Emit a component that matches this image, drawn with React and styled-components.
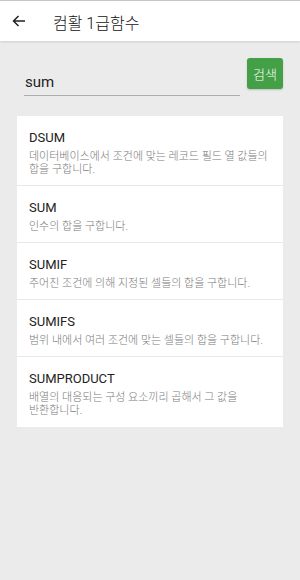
import React from "react";
import styled, { createGlobalStyle } from "styled-components";

const GlobalStyle = createGlobalStyle`
  html, body {
    margin: 0;
    padding: 0;
    background-color: #ebebeb;
    font-family: Roboto, "Noto Sans CJK KR", sans-serif;
  }
`;

const items = [
  { name: "DSUM", text: "데이터베이스에서 조건에 맞는 레코드 필드 열 값들의 합을 구합니다." },
  { name: "SUM", text: "인수의 합을 구합니다." },
  { name: "SUMIF", text: "주어진 조건에 의해 지정된 셀들의 합을 구합니다." },
  { name: "SUMIFS", text: "범위 내에서 여러 조건에 맞는 셀들의 합을 구합니다." },
  { name: "SUMPRODUCT", text: "배열의 대응되는 구성 요소끼리 곱해서 그 값을 반환합니다." },
];

function App() {
  return (
    <Page>
      <GlobalStyle />
      <Header>
        <Back>
          <svg width="14" height="12" viewBox="0 0 14 12">
            <path d="M13 6H1.5M6.5 1L1.5 6l5 5" fill="none" stroke="#222" strokeWidth="1.5" />
          </svg>
        </Back>
        <Title>컴활 1급함수</Title>
      </Header>
      <SearchRow>
        <Field>sum</Field>
        <SearchBtn>검색</SearchBtn>
      </SearchRow>
      <Card>
        {items.map((item) => (
          <Item key={item.name}>
            <Name>{item.name}</Name>
            <Desc>{item.text}</Desc>
          </Item>
        ))}
      </Card>
    </Page>
  );
}

export default App;

const Page = styled.div`
  width: 300px;
  min-height: 580px;
  background-color: #ebebeb;
  border-top: 1px solid #c8c8c8;
  box-sizing: border-box;
`;
const Header = styled.div`
  height: 40px;
  background-color: white;
  display: flex;
  align-items: center;
  box-shadow: 0 1px 2px rgba(0, 0, 0, 0.12);
`;
const Back = styled.span`
  width: 14px;
  margin-left: 12px;
  display: flex;
  align-items: center;
`;
const Title = styled.span`
  margin-left: 27px;
  font-size: 16px;
  font-weight: 300;
  color: #111;
  padding-top: 1px;
`;
const SearchRow = styled.div`
  display: flex;
  align-items: flex-start;
  padding: 17px 17px 0 24px;
  height: 58px;
`;
const Field = styled.div`
  width: 216px;
  height: 37px;
  box-sizing: border-box;
  border-bottom: 1px solid #a9adb0;
  padding: 14px 0 0 1px;
  font-size: 15px;
  color: #222;
  margin-top: 1px;
`;
const SearchBtn = styled.button`
  margin-left: 7px;
  width: 36px;
  height: 31px;
  background-color: #43a047;
  color: white;
  border: none;
  border-radius: 3px;
  font-family: inherit;
  font-size: 13px;
  font-weight: 300;
  padding: 0;
  box-shadow: 0 1px 2px rgba(0, 0, 0, 0.2);
`;
const Card = styled.div`
  margin: 0 17px;
  background-color: white;
  display: flex;
  flex-direction: column;
`;
const Item = styled.div`
  padding: 13px 12px 9px;
  border-bottom: 1px solid #e8e8e8;
  &:last-child {
    border-bottom: none;
    padding-bottom: 10px;
  }
`;
const Name = styled.div`
  font-size: 13px;
  color: #222;
  line-height: 18px;
`;
const Desc = styled.div`
  font-size: 11px;
  font-weight: 300;
  color: #7a7a7a;
  line-height: 13px;
  margin-top: 3px;
  word-break: keep-all;
`;
